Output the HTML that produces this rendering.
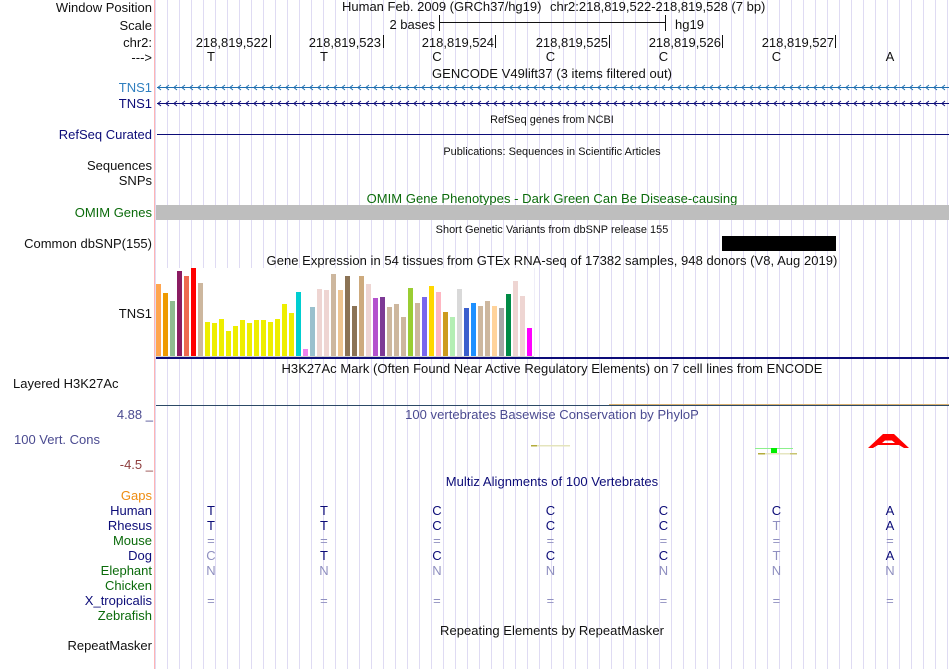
<!DOCTYPE html>
<html><head><meta charset="utf-8"><title>Genome Browser</title>
<style>html,body{margin:0;padding:0;background:#fff}svg{display:block}text{font-family:"Liberation Sans",sans-serif;font-size:13px;fill:#111}.e{text-anchor:end}.m{text-anchor:middle;letter-spacing:.04px}.s{font-size:10.900px}.b{fill:#0c0c78}.g{fill:#0b6b0b}.f{fill:#8f8fc0}.c{fill:#4a4a90}</style></head>
<body>
<svg width="950" height="669" viewBox="0 0 950 669" xmlns="http://www.w3.org/2000/svg">
<defs>
<pattern id="grid" x="167" y="0" width="12" height="20" patternUnits="userSpaceOnUse"><rect x="0" width="1" height="20" fill="#dfdbf3"/></pattern>
<pattern id="ch1" x="157" y="83" width="8" height="9" patternUnits="userSpaceOnUse"><path d="M4 2 L0.800 4.500 L4 7" fill="none" stroke="#1f6fb0" stroke-width="0.900"/></pattern>
<pattern id="ch2" x="157" y="99" width="8" height="9" patternUnits="userSpaceOnUse"><path d="M4 2 L0.800 4.500 L4 7" fill="none" stroke="#0c0c78" stroke-width="0.900"/></pattern>
</defs>
<rect width="950" height="669" fill="#fff"/>
<rect x="155" width="795" height="669" fill="url(#grid)"/>
<rect x="154" width="1" height="669" fill="#ffb4b4"/>

<text class="e" x="152" y="12">Window Position</text>
<text class="e" x="152" y="30">Scale</text>
<text class="e" x="152" y="47">chr2:</text>
<text class="e" x="152" y="62">---&gt;</text>
<text x="342" y="11">Human Feb. 2009 (GRCh37/hg19)</text>
<text x="550" y="11">chr2:218,819,522-218,819,528 (7 bp)</text>
<text class="e" x="435" y="29">2 bases</text>
<text x="675" y="29">hg19</text>
<path d="M439.500 17V33M439.500 24.500H665.500M665.500 17V33" stroke="#111" stroke-width="1" fill="none" transform="translate(0,-2)"/>
<text class="e" x="268" y="47">218,819,522</text><rect x="270" y="35" width="1" height="13" fill="#111"/>
<text class="e" x="381" y="47">218,819,523</text><rect x="383" y="35" width="1" height="13" fill="#111"/>
<text class="e" x="494" y="47">218,819,524</text><rect x="495" y="35" width="1" height="13" fill="#111"/>
<text class="e" x="608" y="47">218,819,525</text><rect x="609" y="35" width="1" height="13" fill="#111"/>
<text class="e" x="721" y="47">218,819,526</text><rect x="722" y="35" width="1" height="13" fill="#111"/>
<text class="e" x="834" y="47">218,819,527</text><rect x="835" y="35" width="1" height="13" fill="#111"/>
<text class="m" x="211" y="61">T</text><text class="m" x="324" y="61">T</text><text class="m" x="437" y="61">C</text><text class="m" x="550.500" y="61">C</text><text class="m" x="663.500" y="61">C</text><text class="m" x="776.500" y="61">C</text><text class="m" x="890" y="61">A</text>
<text class="m" x="552" y="78">GENCODE V49lift37 (3 items filtered out)</text>

<text class="e" x="152" y="92" style="fill:#2f7fbf">TNS1</text>
<rect x="157" y="83" width="792" height="9" fill="url(#ch1)"/>
<rect x="157" y="87" width="792" height="1" fill="#1f6fb0"/>
<text class="e b" x="152" y="108">TNS1</text>
<rect x="157" y="99" width="792" height="9" fill="url(#ch2)"/>
<rect x="157" y="103" width="792" height="1" fill="#0c0c78"/>
<text class="m s" x="552" y="123">RefSeq genes from NCBI</text>
<text class="e b" x="152" y="139">RefSeq Curated</text>
<rect x="157" y="134" width="792" height="1" fill="#0c0c78"/>
<text class="m s" x="552" y="155">Publications: Sequences in Scientific Articles</text>
<text class="e" x="152" y="170">Sequences</text>
<text class="e" x="152" y="185">SNPs</text>
<text class="m g" x="552" y="203">OMIM Gene Phenotypes - Dark Green Can Be Disease-causing</text>
<text class="e g" x="152" y="217">OMIM Genes</text>
<rect x="156" y="205" width="793" height="15" fill="#bebebe"/>
<text class="m s" x="552" y="233">Short Genetic Variants from dbSNP release 155</text>
<text class="e" x="152" y="248">Common dbSNP(155)</text>
<rect x="722" y="236" width="114" height="15" fill="#000"/>
<text class="m" x="552" y="265">Gene Expression in 54 tissues from GTEx RNA-seq of 17382 samples, 948 donors (V8, Aug 2019)</text>
<text class="e" x="152" y="318">TNS1</text>

<rect x="156" y="268" width="378" height="88" fill="#fff"/>
<rect x="534" y="268" width="1" height="88" fill="#efeef8"/>
<rect x="156" y="284" width="5" height="72" fill="#ffa54f"/>
<rect x="163" y="293" width="5" height="63" fill="#ee9a00"/>
<rect x="170" y="301" width="5" height="55" fill="#8fbc8f"/>
<rect x="177" y="271" width="5" height="85" fill="#8b1c62"/>
<rect x="184" y="276" width="5" height="80" fill="#ee6a50"/>
<rect x="191" y="268" width="5" height="88" fill="#ff0000"/>
<rect x="198" y="283" width="5" height="73" fill="#cdb79e"/>
<rect x="205" y="322" width="5" height="34" fill="#eeee00"/>
<rect x="212" y="323" width="5" height="33" fill="#eeee00"/>
<rect x="219" y="319" width="5" height="37" fill="#eeee00"/>
<rect x="226" y="331" width="5" height="25" fill="#eeee00"/>
<rect x="233" y="326" width="5" height="30" fill="#eeee00"/>
<rect x="240" y="320" width="5" height="36" fill="#eeee00"/>
<rect x="247" y="323" width="5" height="33" fill="#eeee00"/>
<rect x="254" y="320" width="5" height="36" fill="#eeee00"/>
<rect x="261" y="320" width="5" height="36" fill="#eeee00"/>
<rect x="268" y="322" width="5" height="34" fill="#eeee00"/>
<rect x="275" y="319" width="5" height="37" fill="#eeee00"/>
<rect x="282" y="304" width="5" height="52" fill="#eeee00"/>
<rect x="289" y="313" width="5" height="43" fill="#eeee00"/>
<rect x="296" y="292" width="5" height="64" fill="#00ced1"/>
<rect x="303" y="349" width="5" height="7" fill="#ee82ee"/>
<rect x="310" y="307" width="5" height="49" fill="#9ac0cd"/>
<rect x="317" y="289" width="5" height="67" fill="#eed5d2"/>
<rect x="324" y="290" width="5" height="66" fill="#eed5d2"/>
<rect x="331" y="274" width="5" height="82" fill="#cdb79e"/>
<rect x="338" y="290" width="5" height="66" fill="#eec591"/>
<rect x="345" y="276" width="5" height="80" fill="#8b7355"/>
<rect x="352" y="306" width="5" height="50" fill="#8b7355"/>
<rect x="359" y="276" width="5" height="80" fill="#cdaa7d"/>
<rect x="366" y="284" width="5" height="72" fill="#eed5d2"/>
<rect x="373" y="298" width="5" height="58" fill="#b452cd"/>
<rect x="380" y="297" width="5" height="59" fill="#7d3a96"/>
<rect x="387" y="307" width="5" height="49" fill="#cdb79e"/>
<rect x="394" y="304" width="5" height="52" fill="#cdb79e"/>
<rect x="401" y="317" width="5" height="39" fill="#cdb79e"/>
<rect x="408" y="288" width="5" height="68" fill="#9acd32"/>
<rect x="415" y="303" width="5" height="53" fill="#cdb79e"/>
<rect x="422" y="297" width="5" height="59" fill="#7a67ee"/>
<rect x="429" y="286" width="5" height="70" fill="#ffd700"/>
<rect x="436" y="292" width="5" height="64" fill="#ffb6c1"/>
<rect x="443" y="312" width="5" height="44" fill="#cd9b1d"/>
<rect x="450" y="317" width="5" height="39" fill="#b4eeb4"/>
<rect x="457" y="289" width="5" height="67" fill="#d9d9d9"/>
<rect x="464" y="308" width="5" height="48" fill="#3a5fcd"/>
<rect x="471" y="303" width="5" height="53" fill="#1e90ff"/>
<rect x="478" y="306" width="5" height="50" fill="#cdb79e"/>
<rect x="485" y="301" width="5" height="55" fill="#cdb79e"/>
<rect x="492" y="306" width="5" height="50" fill="#ffd39b"/>
<rect x="499" y="308" width="5" height="48" fill="#a6a6a6"/>
<rect x="506" y="294" width="5" height="62" fill="#008b45"/>
<rect x="513" y="281" width="5" height="75" fill="#eed5d2"/>
<rect x="520" y="296" width="5" height="60" fill="#eed5d2"/>
<rect x="527" y="328" width="5" height="28" fill="#ff00ff"/>
<rect x="156" y="356" width="378" height="1" fill="#d0d0d0"/>
<rect x="156" y="357" width="793" height="2" fill="#0c0c78"/>

<text class="m" x="552" y="373">H3K27Ac Mark (Often Found Near Active Regulatory Elements) on 7 cell lines from ENCODE</text>
<text x="13" y="388">Layered H3K27Ac</text>
<rect x="156" y="405" width="793" height="1" fill="#2c4a66"/>
<rect x="609" y="404" width="340" height="1" fill="#d8b070"/>

<text class="e c" x="153" y="419">4.88 _</text>
<text class="m c" x="552" y="419">100 vertebrates Basewise Conservation by PhyloP</text>
<text class="c" x="14" y="444">100 Vert. Cons</text>
<text class="e" x="153" y="469" style="fill:#8f3f3f">-4.5 _</text>

<rect x="531" y="445" width="39" height="1.500" fill="#e4e4bc"/>
<rect x="531" y="445" width="6" height="1.500" fill="#b4ac3c"/>
<rect x="755" y="448" width="38" height="1" fill="#8cf08c"/>
<rect x="771" y="448" width="6" height="5" fill="#00ee00"/>
<rect x="758" y="453" width="39" height="1.500" fill="#e6e6c0"/>
<rect x="758" y="453" width="7" height="1.500" fill="#b4ac3c"/>
<rect x="790" y="453" width="7" height="1.500" fill="#c8c470"/>
<path fill-rule="evenodd" d="M868 448 L883 434 H894 L909 448 H904 L899 445 H878 L873 448Z M885 440.500 L882 443 H895 L892 440.500Z" fill="#ff0000"/>

<text class="m" x="552" y="486" style="fill:#0c0c78">Multiz Alignments of 100 Vertebrates</text>
<text class="e" x="152" y="500" style="fill:#ee8c10">Gaps</text>
<text class="e b" x="152" y="515">Human</text>
<text class="e b" x="152" y="530">Rhesus</text>
<text class="e g" x="152" y="545">Mouse</text>
<text class="e b" x="152" y="560">Dog</text>
<text class="e g" x="152" y="575">Elephant</text>
<text class="e g" x="152" y="590">Chicken</text>
<text class="e b" x="152" y="605">X_tropicalis</text>
<text class="e g" x="152" y="620">Zebrafish</text>

<text class="m b" x="211" y="515">T</text><text class="m b" x="324" y="515">T</text><text class="m b" x="437" y="515">C</text><text class="m b" x="550.500" y="515">C</text><text class="m b" x="663.500" y="515">C</text><text class="m b" x="776.500" y="515">C</text><text class="m b" x="890" y="515">A</text>
<text class="m b" x="211" y="530">T</text><text class="m b" x="324" y="530">T</text><text class="m b" x="437" y="530">C</text><text class="m b" x="550.500" y="530">C</text><text class="m b" x="663.500" y="530">C</text><text class="m f" x="776.500" y="530">T</text><text class="m b" x="890" y="530">A</text>
<text class="m f" x="211" y="545">=</text><text class="m f" x="324" y="545">=</text><text class="m f" x="437" y="545">=</text><text class="m f" x="550.500" y="545">=</text><text class="m f" x="663.500" y="545">=</text><text class="m f" x="776.500" y="545">=</text><text class="m f" x="890" y="545">=</text>
<text class="m f" x="211" y="560">C</text><text class="m b" x="324" y="560">T</text><text class="m b" x="437" y="560">C</text><text class="m b" x="550.500" y="560">C</text><text class="m b" x="663.500" y="560">C</text><text class="m f" x="776.500" y="560">T</text><text class="m b" x="890" y="560">A</text>
<text class="m f" x="211" y="575">N</text><text class="m f" x="324" y="575">N</text><text class="m f" x="437" y="575">N</text><text class="m f" x="550.500" y="575">N</text><text class="m f" x="663.500" y="575">N</text><text class="m f" x="776.500" y="575">N</text><text class="m f" x="890" y="575">N</text>
<text class="m f" x="211" y="605">=</text><text class="m f" x="324" y="605">=</text><text class="m f" x="437" y="605">=</text><text class="m f" x="550.500" y="605">=</text><text class="m f" x="663.500" y="605">=</text><text class="m f" x="776.500" y="605">=</text><text class="m f" x="890" y="605">=</text>

<text class="m" x="552" y="635">Repeating Elements by RepeatMasker</text>
<text class="e" x="152" y="650">RepeatMasker</text>
</svg>
</body></html>
